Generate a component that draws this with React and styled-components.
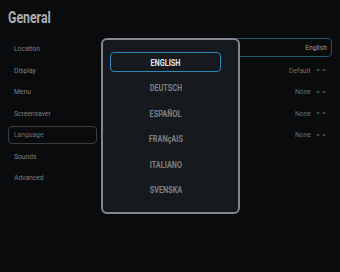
import React from "react";
import styled, { createGlobalStyle } from "styled-components";

const Global = createGlobalStyle`
  html, body { margin: 0; padding: 0; background: #0a0b0d; }
  body { width: 340px; height: 272px; overflow: hidden; }
  * { box-sizing: border-box; }
`;

const FONT = `Roboto, "Liberation Sans", sans-serif`;

const Page = styled.div`
  position: relative;
  width: 340px;
  height: 272px;
  padding: 8px 8px 0 8px;
  background: #0a0b0d;
  font-family: ${FONT};
`;

const Squeeze = styled.span`
  display: inline-block;
  white-space: nowrap;
  transform: scaleX(${(p) => p.$scale || 0.84});
  transform-origin: ${(p) => p.$origin || "left"} center;
`;

const Title = styled.h1`
  margin: 0;
  height: 20px;
  line-height: 20px;
  font-size: 16px;
  font-weight: 700;
  color: #aeb0b3;
`;

const Body = styled.div`
  display: grid;
  grid-template-columns: 89px 1fr;
  column-gap: 7px;
  margin-top: 10px;
`;

const Nav = styled.ul`
  list-style: none;
  margin: 0;
  padding: 0;
  display: flex;
  flex-direction: column;
`;

const NavItem = styled.li`
  display: flex;
  align-items: center;
  padding-left: 5px;
  font-size: 8px;
  color: ${(p) => (p.$active ? "#6d7075" : "#7d8085")};
  border: 1.5px solid ${(p) => (p.$active ? "#3a3d42" : "transparent")};
  border-radius: 4px;
  height: ${(p) => (p.$active ? "18.5px" : "21.5px")};
  margin: ${(p) => (p.$active ? "1.5px 0" : "0")};
`;

const Values = styled.div`
  display: flex;
  flex-direction: column;
`;

const ValueRow = styled.div`
  height: ${(p) => (p.$boxed ? "19px" : "21.5px")};
  margin-bottom: ${(p) => (p.$boxed ? "2.5px" : "0")};
  display: flex;
  align-items: center;
  justify-content: flex-end;
  gap: 5px;
  padding-right: ${(p) => (p.$boxed ? "4px" : "5px")};
  font-size: 8px;
  color: ${(p) => (p.$boxed ? "#9a9da1" : "#6f7277")};
  border: 1.5px solid ${(p) => (p.$boxed ? "#1d5670" : "transparent")};
  border-radius: 4px;
`;

const Arrows = styled.span`
  display: inline-flex;
  gap: 2px;
  align-items: center;
`;

const Chevron = ({ up }) => (
  <svg width="4" height="4" viewBox="0 0 4 4">
    <path
      d={up ? "M0.6 3 L2 1.2 L3.4 3" : "M0.6 1 L2 2.8 L3.4 1"}
      fill="none"
      stroke="#6f7277"
      strokeWidth="0.9"
    />
  </svg>
);

const Popup = styled.div`
  position: absolute;
  left: 101px;
  top: 38px;
  width: 139px;
  height: 176px;
  border: 2px solid #83878d;
  border-radius: 6px;
  background: #16191d;
  padding: 12px 17px 0 7px;
`;

const Options = styled.ul`
  list-style: none;
  margin: 0;
  padding: 0;
  display: flex;
  flex-direction: column;
  gap: 5.6px;
`;

const Option = styled.li`
  height: 20px;
  display: flex;
  align-items: center;
  justify-content: center;
  padding-top: 1px;
  font-size: 8.5px;
  font-weight: 700;
  color: ${(p) => (p.$selected ? "#e6e8ea" : "#7c8085")};
  border: 1.5px solid ${(p) => (p.$selected ? "#2a8cb6" : "transparent")};
  border-radius: 4px;
`;

const navItems = ["Location", "Display", "Menu", "Screensaver", "Language", "Sounds", "Advanced"];
const values = [
  { text: "English", boxed: true },
  { text: "Default", arrows: true },
  { text: "None", arrows: true },
  { text: "None", arrows: true },
  { text: "None", arrows: true },
];
const langs = ["ENGLISH", "DEUTSCH", "ESPAÑOL", "FRANçAIS", "ITALIANO", "SVENSKA"];

export default function App() {
  return (
    <>
      <Global />
      <Page>
        <Title>
          <Squeeze $scale={0.77}>General</Squeeze>
        </Title>
        <Body>
          <Nav>
            {navItems.map((n) => (
              <NavItem key={n} $active={n === "Language"}>
                <Squeeze $scale={0.84}>{n}</Squeeze>
              </NavItem>
            ))}
          </Nav>
          <Values>
            {values.map((v, i) => (
              <ValueRow key={i} $boxed={v.boxed}>
                <Squeeze $scale={0.84} $origin="right">
                  {v.text}
                </Squeeze>
                {v.arrows && (
                  <Arrows>
                    <Chevron />
                    <Chevron up />
                  </Arrows>
                )}
              </ValueRow>
            ))}
          </Values>
        </Body>
        <Popup>
          <Options>
            {langs.map((l, i) => (
              <Option key={l} $selected={i === 0}>
                <Squeeze $scale={0.86} $origin="center">
                  {l}
                </Squeeze>
              </Option>
            ))}
          </Options>
        </Popup>
      </Page>
    </>
  );
}
